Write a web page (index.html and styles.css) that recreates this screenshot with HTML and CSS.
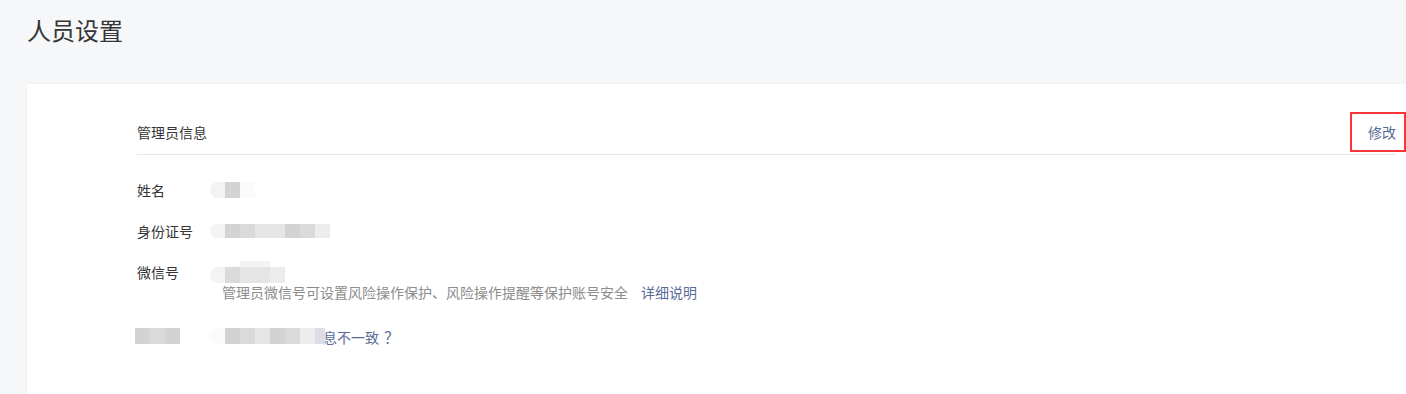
FILE: index.html
```html
<!DOCTYPE html>
<html lang="zh-CN">

<head>
    <meta charset="UTF-8">
    <meta name="viewport" content="width=device-width, initial-scale=1.0">
    <title>人员设置</title>
    <link rel="stylesheet" href="styles.css">
</head>

<body>
    <div class="page">
        <h1 class="page-title">人员设置</h1>

        <div class="card">
            <div class="section-head">
                <span class="section-title">管理员信息</span>
                <a class="edit-link marked" href="#">修改</a>
            </div>

            <div class="info-row">
                <span class="info-label">姓名</span>
                <span class="info-value">
                    <span class="mosaic tall">
                        <i class="g5 first"></i><i class="g1"></i><i class="g6"></i>
                    </span>
                </span>
            </div>

            <div class="info-row">
                <span class="info-label">身份证号</span>
                <span class="info-value">
                    <span class="mosaic">
                        <i class="g5 first"></i><i class="g1"></i><i class="g2"></i><i class="g3"></i><i class="g3"></i><i class="g1"></i><i class="g2"></i><i class="g4"></i>
                    </span>
                </span>
            </div>

            <div class="info-row">
                <span class="info-label">微信号</span>
                <span class="info-value">
                    <span class="mosaic tall low">
                        <i class="g5 first"></i><i class="g2"></i><i class="g3 bump"></i><i class="g3"></i><i class="g4"></i>
                    </span>
                </span>
            </div>
            <p class="info-tip">管理员微信号可设置风险操作保护、风险操作提醒等保护账号安全<a class="tip-link" href="#">详细说明</a></p>

            <div class="info-row last-row">
                <span class="info-label">
                    <span class="mosaic tall shift">
                        <i class="g1"></i><i class="g2"></i><i class="g1"></i>
                    </span>
                </span>
                <span class="info-value">
                    <span class="mosaic tall">
                        <i class="g6 first"></i><i class="g1"></i><i class="g2"></i><i class="g3"></i><i class="g1"></i><i class="g2"></i><i class="g4"></i><i class="g7 half"></i>
                    </span>
                    <a class="mismatch-link" href="#">息不一致<span class="qmark">？</span></a>
                </span>
            </div>
        </div>
    </div>
</body>

</html>
```

FILE: styles.css
```css
body {
    font-family: "Liberation Sans", "Noto Sans CJK SC", sans-serif;
    background-color: #f6f7f9;
    color: #353535;
    margin: 0;
    padding: 0;
    overflow: hidden;
}

a {
    text-decoration: none;
}

.page {
    padding: 14px 0 0 27px;
}

.page-title {
    margin: 0;
    font-size: 24px;
    font-weight: normal;
    line-height: 36px;
    color: #353535;
}

.card {
    margin-top: 34px;
    background-color: #fff;
    padding: 26px 10px 40px 110px;
    min-height: 300px;
    box-shadow: 0 0 3px rgba(0, 0, 0, 0.06);
}

.section-head {
    display: flex;
    justify-content: space-between;
    align-items: center;
    height: 44px;
    border-bottom: 1px solid #e6e6e6;
    font-size: 14px;
}

.section-title {
    color: #353535;
}

.edit-link {
    color: #576b95;
    position: relative;
}

/* red annotation box round the link */
.marked::after {
    content: "";
    position: absolute;
    top: -10px;
    bottom: -10px;
    left: -18px;
    right: -10px;
    border: 2px solid #fb3535;
}

.info-row {
    display: flex;
    align-items: center;
    height: 20px;
    margin-top: 21px;
    font-size: 14px;
}

.section-head + .info-row {
    margin-top: 25px;
}

.info-label {
    width: 73px;
    flex-shrink: 0;
}

.info-value {
    display: flex;
    align-items: center;
}

.info-tip {
    margin: 1px 0 0 85px;
    font-size: 14px;
    line-height: 20px;
    color: #8c8c8c;
}

.tip-link {
    color: #576b95;
    margin-left: 13px;
}

.last-row {
    margin-top: 23px;
}

.mismatch-link {
    color: #576b95;
    margin-left: -2px;
}

.qmark {
    margin-left: 5px;
    font-size: 15px;
}

/* blurred-out personal data */
.mosaic {
    display: flex;
    height: 14px;
    position: relative;
}

.mosaic.tall {
    height: 16px;
}

.mosaic.low {
    top: 3px;
}

.mosaic.shift {
    left: -2px;
}

.mosaic i {
    display: block;
    width: 15px;
    height: 100%;
}

.mosaic i.first {
    border-radius: 8px 0 0 8px;
}

.mosaic i.half {
    width: 10px;
}

.mosaic i.bump {
    position: relative;
}

.mosaic i.bump::before {
    content: "";
    position: absolute;
    left: 0;
    top: -6px;
    width: 30px;
    height: 6px;
    background-color: #f3f3f3;
}

.g1 { background-color: #d3d3d3; }
.g2 { background-color: #dadadb; }
.g3 { background-color: #e5e5e5; }
.g4 { background-color: #ececec; }
.g5 { background-color: #f3f3f2; }
.g6 { background-color: #fbfbfb; }
.g7 { background-color: #dddde6; }
```
